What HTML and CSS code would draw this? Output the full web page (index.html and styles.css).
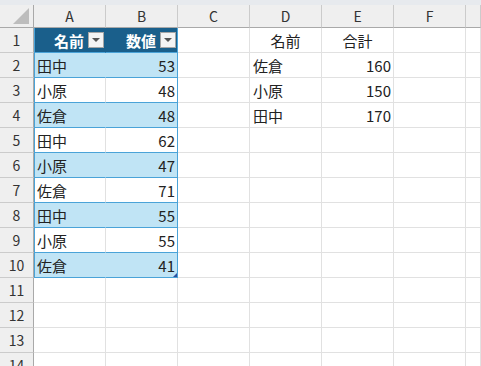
FILE: index.html
```html
<!DOCTYPE html>
<html lang="ja">
<head>
    <meta charset="UTF-8">
    <meta name="viewport" content="width=device-width, initial-scale=1.0">
    <title>Sheet1</title>
    <link rel="stylesheet" href="styles.css">
</head>
<body>
    <div class="ribbon-edge"></div>
    <div class="sheet">
        <div class="row col-heads">
            <div class="corner">
                <svg width="17" height="17" viewBox="0 0 17 17"><polygon points="16,0 16,16 0,16" fill="#bdbdbd"/></svg>
            </div>
            <div class="ch">A</div>
            <div class="ch">B</div>
            <div class="ch">C</div>
            <div class="ch">D</div>
            <div class="ch">E</div>
            <div class="ch">F</div>
            <div class="ch"></div>
        </div>

        <div class="row">
            <div class="rh">1</div>
            <div class="cell t th ta">名前<span class="dd"></span></div>
            <div class="cell t th tb">数値<span class="dd"></span></div>
            <div class="cell"></div>
            <div class="cell center">名前</div>
            <div class="cell center">合計</div>
            <div class="cell"></div>
            <div class="cell"></div>
        </div>
        <div class="row">
            <div class="rh">2</div>
            <div class="cell t band ta">田中</div>
            <div class="cell t band tb num">53</div>
            <div class="cell"></div>
            <div class="cell">佐倉</div>
            <div class="cell num">160</div>
            <div class="cell"></div>
            <div class="cell"></div>
        </div>
        <div class="row">
            <div class="rh">3</div>
            <div class="cell t ta">小原</div>
            <div class="cell t tb num">48</div>
            <div class="cell"></div>
            <div class="cell">小原</div>
            <div class="cell num">150</div>
            <div class="cell"></div>
            <div class="cell"></div>
        </div>
        <div class="row">
            <div class="rh">4</div>
            <div class="cell t band ta">佐倉</div>
            <div class="cell t band tb num">48</div>
            <div class="cell"></div>
            <div class="cell">田中</div>
            <div class="cell num">170</div>
            <div class="cell"></div>
            <div class="cell"></div>
        </div>
        <div class="row">
            <div class="rh">5</div>
            <div class="cell t ta">田中</div>
            <div class="cell t tb num">62</div>
            <div class="cell"></div><div class="cell"></div><div class="cell"></div><div class="cell"></div><div class="cell"></div>
        </div>
        <div class="row">
            <div class="rh">6</div>
            <div class="cell t band ta">小原</div>
            <div class="cell t band tb num">47</div>
            <div class="cell"></div><div class="cell"></div><div class="cell"></div><div class="cell"></div><div class="cell"></div>
        </div>
        <div class="row">
            <div class="rh">7</div>
            <div class="cell t ta">佐倉</div>
            <div class="cell t tb num">71</div>
            <div class="cell"></div><div class="cell"></div><div class="cell"></div><div class="cell"></div><div class="cell"></div>
        </div>
        <div class="row">
            <div class="rh">8</div>
            <div class="cell t band ta">田中</div>
            <div class="cell t band tb num">55</div>
            <div class="cell"></div><div class="cell"></div><div class="cell"></div><div class="cell"></div><div class="cell"></div>
        </div>
        <div class="row">
            <div class="rh">9</div>
            <div class="cell t ta">小原</div>
            <div class="cell t tb num">55</div>
            <div class="cell"></div><div class="cell"></div><div class="cell"></div><div class="cell"></div><div class="cell"></div>
        </div>
        <div class="row">
            <div class="rh">10</div>
            <div class="cell t band ta">佐倉</div>
            <div class="cell t band tb num last">41</div>
            <div class="cell"></div><div class="cell"></div><div class="cell"></div><div class="cell"></div><div class="cell"></div>
        </div>
        <div class="row">
            <div class="rh">11</div>
            <div class="cell"></div><div class="cell"></div><div class="cell"></div><div class="cell"></div><div class="cell"></div><div class="cell"></div><div class="cell"></div>
        </div>
        <div class="row">
            <div class="rh">12</div>
            <div class="cell"></div><div class="cell"></div><div class="cell"></div><div class="cell"></div><div class="cell"></div><div class="cell"></div><div class="cell"></div>
        </div>
        <div class="row">
            <div class="rh">13</div>
            <div class="cell"></div><div class="cell"></div><div class="cell"></div><div class="cell"></div><div class="cell"></div><div class="cell"></div><div class="cell"></div>
        </div>
        <div class="row">
            <div class="rh">14</div>
            <div class="cell"></div><div class="cell"></div><div class="cell"></div><div class="cell"></div><div class="cell"></div><div class="cell"></div><div class="cell"></div>
        </div>
    </div>
</body>
</html>
```

FILE: styles.css
```css
body {
    margin: 0;
    background: #fff;
    font-family: "Noto Sans CJK JP", "Noto Sans", sans-serif;
    font-size: 15px;
    color: #222;
    overflow: hidden;
}
.ribbon-edge {
    height: 5px;
    background-color: #e7eaee;
}
.row {
    display: grid;
    grid-template-columns: 34px repeat(6, 72px) 1fr;
    height: 25px;
}
.col-heads {
    height: 23px;
}
.corner, .ch, .rh, .cell {
    box-sizing: border-box;
    display: flex;
    align-items: center;
    overflow: hidden;
    white-space: nowrap;
}
.corner {
    background-color: #efefef;
    border-right: 1px solid #a9a9a9;
    border-bottom: 1px solid #a9a9a9;
    justify-content: flex-end;
    align-items: flex-end;
    padding: 0 3px 2px 0;
}
.ch {
    background-color: #efefef;
    border-right: 1px solid #cbcbcb;
    border-bottom: 1px solid #a9a9a9;
    justify-content: center;
    font-size: 14px;
    color: #333;
}
.rh {
    background-color: #efefef;
    border-right: 1px solid #a9a9a9;
    border-bottom: 1px solid #cbcbcb;
    justify-content: center;
    font-size: 14px;
    color: #333;
}
.cell {
    border-right: 1px solid #e1e1e1;
    border-bottom: 1px solid #e1e1e1;
    padding: 0 3px;
}
.center {
    justify-content: center;
}
.num {
    justify-content: flex-end;
    padding-right: 2px;
}

/* table A1:B10 */
.t {
    border-bottom-color: #4aa3d8;
}
.ta {
    border-left: 1px solid #4aa3d8;
    padding-left: 2px;
}
.tb {
    border-right-color: #4aa3d8;
}
.band {
    background-color: #c0e4f5;
}
.band.ta {
    border-right-color: #c0e4f5;
}
.th {
    background-color: #1a5f8b;
    border-right-color: #1a5f8b;
    border-bottom-color: #4aa3d8;
    color: #fff;
    font-weight: bold;
    justify-content: flex-end;
    padding-right: 1px;
}
.th.tb {
    border-right-color: #4aa3d8;
}
.dd {
    position: relative;
    width: 16px;
    height: 16px;
    box-sizing: border-box;
    margin-left: 4px;
    background-color: #f4f4f4;
    border: 1px solid #a6a6a6;
}
.dd::after {
    content: "";
    position: absolute;
    left: 3px;
    top: 5px;
    border-left: 4px solid transparent;
    border-right: 4px solid transparent;
    border-top: 4px solid #555;
}
.last {
    position: relative;
}
.last::after {
    content: "";
    position: absolute;
    right: 0;
    bottom: 0;
    border-left: 4px solid transparent;
    border-bottom: 4px solid #2f4f9e;
}
```
